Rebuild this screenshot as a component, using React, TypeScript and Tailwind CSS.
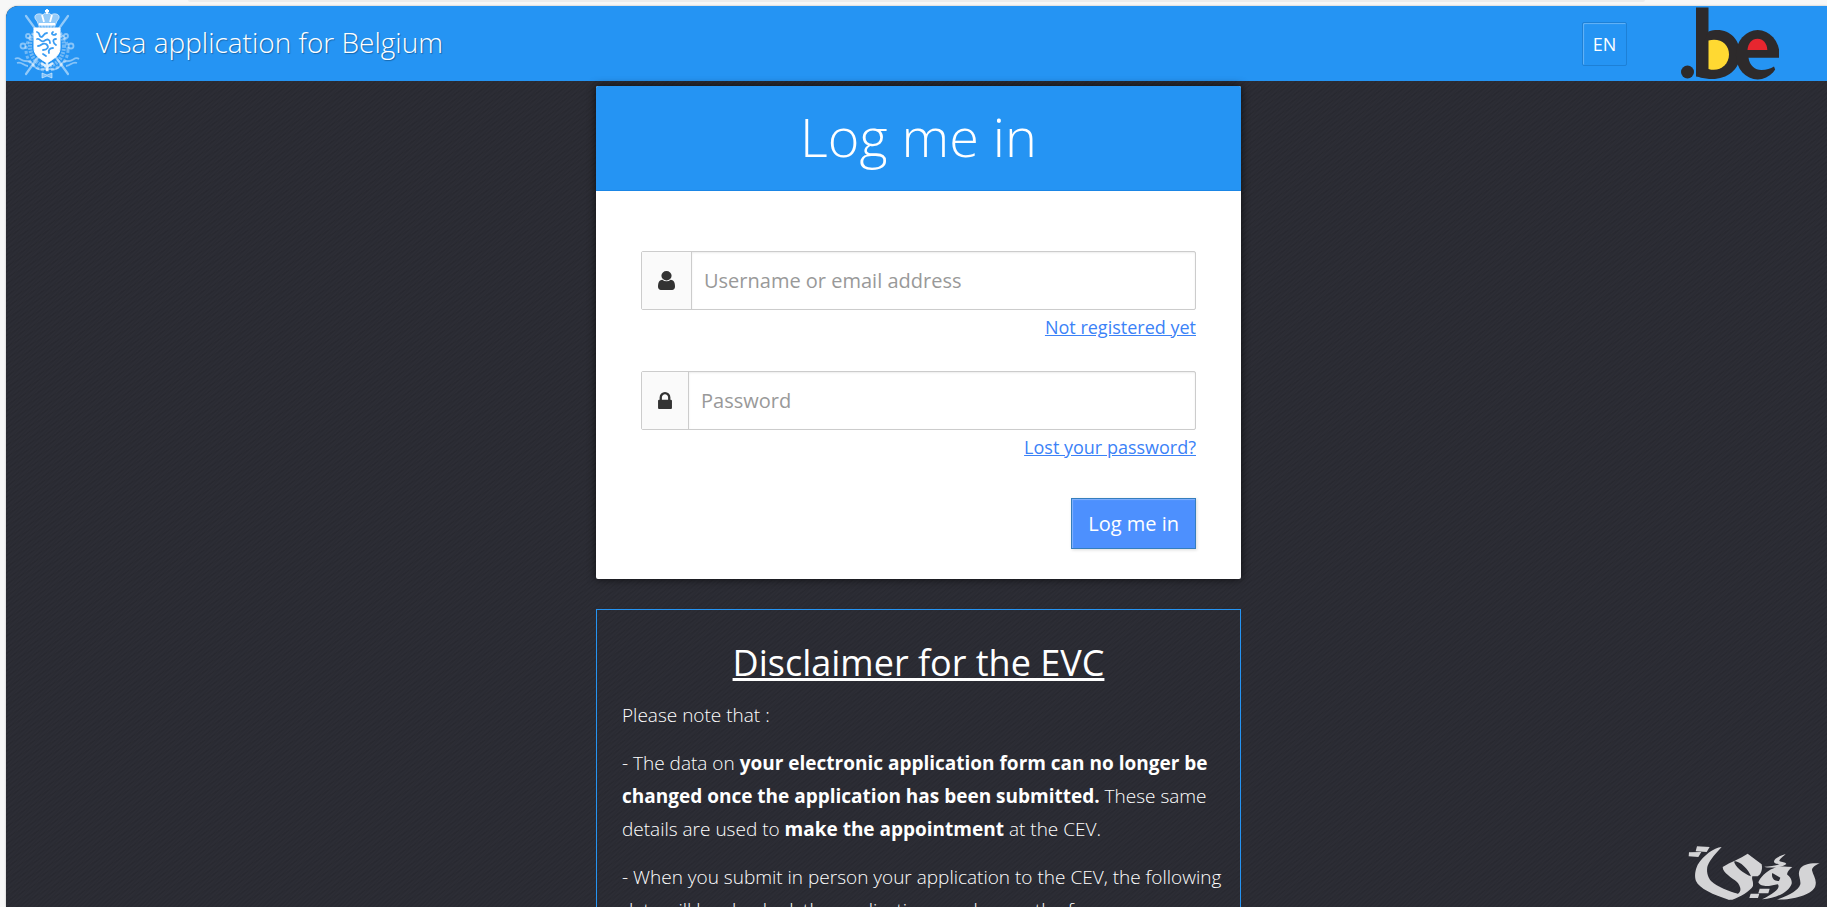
import React, { useState } from "react";

// ==========================================
// LOGOS & ICONS
// ==========================================
const CoatOfArms = () => (
  <svg viewBox="0 0 68 72" className="w-[68px] h-[72px]" fill="none" stroke="white" aria-hidden="true">
    {/* Crossed sceptres */}
    <g opacity="0.5" strokeWidth="2.2" strokeLinecap="round">
      <path d="M12 8L54 66M54 8L12 66" />
    </g>
    {/* Collar */}
    <ellipse cx="33" cy="38" rx="17" ry="20" strokeWidth="4" strokeDasharray="2 1" opacity="0.35" />
    <ellipse cx="33" cy="42" rx="21" ry="20" strokeWidth="3" strokeDasharray="3 2" opacity="0.35" />
    <g opacity="0.45" strokeWidth="1.8">
      <circle cx="9" cy="38" r="2.5" />
      <circle cx="57" cy="38" r="2.5" />
      <circle cx="14" cy="28" r="2" />
      <circle cx="52" cy="28" r="2" />
      <path d="M1 51c4-3 6 2 10 2s6 0 9 5c4 5 8 3 13 3s9 2 13-3c3-5 5-5 9-5s6-5 10-2" />
      <path d="M3 55c5-2 6 3 11 3M63 55c-5-2-6 3-11 3" />
    </g>
    {/* Crown */}
    <path d="M23 13c-6-6 2-9 6-6 1-3 7-3 8 0 4-3 12 0 6 6l-2 5H25z" fill="white" fillOpacity="0.5" strokeOpacity="0.6" />
    <path d="M33 1v5M31 3h4M25 16h16M28 7l2 7M38 7l-2 7" strokeWidth="1.8" />
    {/* Shield */}
    <path d="M20 20h26v20c0 7-5 10-13 15-8-5-13-8-13-15z" fill="white" />
    <g stroke="#3b9df3" strokeWidth="1.8" strokeLinecap="round">
      <path d="M23 24c4 1 1 4 4 5 3 0 2-4 6-4M23 31c4-1 3 4 7 2 4-3 6-1 6 2M24 38c4 0 4-4 8-2 4 3 1 6-3 6M39 24c-3 2 1 4 3 2M42 31c-4 0-3 4 0 6M39 40c-3 0-5 2-4 5M29 46l3 2" />
    </g>
    <path d="M27 55l6 4 6-4M33 55v8" strokeWidth="2.5" opacity="0.8" />
    <path d="M28 65l5 2 5-2v5l-5-2-5 2z" fill="white" fillOpacity="0.4" strokeOpacity="0.5" />
  </svg>
);

const BeLogo = () => (
  <svg viewBox="0 0 98 73" className="w-[98px] h-[73px]" role="img" aria-label=".be">
    <g fill="#2d2a2b">
      <circle cx="6.5" cy="65" r="6.5" />
      <rect x="15" y="0.5" width="12.5" height="69" />
      <path d="M27.5 24.5C45 19 59 30 59 47.5S42 74.5 25 71.5Q20 71 15 69L20 40z" />
      <ellipse cx="76.7" cy="47.7" rx="21.8" ry="24.7" />
    </g>
    <path d="M27.5 33.5C39 30.5 48 37 48 47.5S38 65.5 27.5 62z" fill="#ffd932" />
    <path d="M66.5 43C67 36 71 31.7 76.5 31.7S86 36 86.3 43z" fill="#e7262f" />
    <path d="M67.5 50.7C68.5 58.5 74 63 80.5 63 85.5 63 89.5 61.5 93 59.5L96 67.5 99 73V50.7z" fill="#2594f3" />
  </svg>
);

const UserIcon = () => (
  <svg viewBox="256 128 1280 1536" preserveAspectRatio="none" className="w-[17px] h-[19px]" fill="#333" aria-hidden="true">
    <path d="M1536 1399q0 109-62.5 187t-150.5 78h-854q-88 0-150.5-78t-62.5-187q0-85 8.5-160.5t31.5-152 58.5-131 94-89 134.5-34.5q131 128 313 128t313-128q76 0 134.5 34.5t94 89 58.5 131 31.5 152 8.5 160.5zm-256-887q0 159-112.5 271.5t-271.5 112.5-271.5-112.5-112.5-271.5 112.5-271.5 271.5-112.5 271.5 112.5 112.5 271.5z" />
  </svg>
);

const LockIcon = () => (
  <svg viewBox="320 128 1152 1408" className="w-[14px] h-[17px]" fill="#333" aria-hidden="true">
    <path d="M640 768h512v-192q0-106-75-181t-181-75-181 75-75 181v192zm832 96v576q0 40-28 68t-68 28h-960q-40 0-68-28t-28-68v-576q0-40 28-68t68-28h32v-192q0-184 132-316t316-132 316 132 132 316v192h32q40 0 68 28t28 68z" />
  </svg>
);

const Watermark = () => (
  <svg viewBox="80 74 402 168" className="w-[134px] h-[56px]" fill="#d4d4d6" aria-hidden="true">
    <path d="M110 78l38 2-9 15-33-2zM86 96l37-1-9 15-29-2z" />
    <path d="M184 80C160 82 130 105 112 133 104 150 102 168 107 182 116 204 160 224 205 238L236 222C205 212 172 200 152 182 140 168 138 148 142 136 150 116 168 98 184 80z" />
    <path fillRule="evenodd" d="M187 140C210 125 240 115 262 100L304 132C308 150 300 164 292 168L276 168C273 178 280 182 278 197 270 212 240 230 216 238L205 238 202 214 232 221C244 214 243 200 230 185 215 172 187 158 187 140zM221 122C240 122 265 148 272 168 250 160 222 138 221 122z" />
    <path d="M271 220l26 0-4 13-26 0zM298 205l30 0-4 14-30 0z" />
    <path fillRule="evenodd" d="M396 140C370 137 350 138 340 144 315 154 300 172 294 186 298 196 312 198 326 197L352 192C362 200 345 218 305 237 350 234 386 214 394 190 396 176 386 168 380 162 382 152 388 146 396 140zM336 158L360 172 356 182C340 184 332 170 336 158z" />
    <path d="M376 101C355 108 340 115 341 125 345 132 352 130 358 132 345 137 325 139 312 139 325 144 365 143 378 131 375 124 365 127 357 122 358 115 370 108 376 101z" />
    <path d="M478 129C455 127 425 130 418 148 411 165 422 175 420 192 414 210 390 224 350 238 400 238 450 225 464 200 472 180 458 165 455 150 455 140 468 133 478 129z" />
  </svg>
);

// ==========================================
// FORM FIELD
// ==========================================
const Field = ({
  id,
  type,
  placeholder,
  icon,
  link,
  value,
  onChange,
}: {
  id: string;
  type: string;
  placeholder: string;
  icon: React.ReactNode;
  link: string;
  value: string;
  onChange: (value: string) => void;
}) => (
  <div>
    <div className="flex h-[59px] rounded-xs border border-[#ccc]">
      <label
        htmlFor={id}
        aria-label={placeholder}
        className="flex items-center px-4 bg-[#fafafa] border-r border-[#ccc]"
      >
        {icon}
      </label>
      <input
        id={id}
        type={type}
        placeholder={placeholder}
        value={value}
        onChange={(e) => onChange(e.target.value)}
        className="flex-1 min-w-0 px-3 text-xl text-[#555] placeholder:text-[#999] shadow-[inset_0_1px_2px_rgba(0,0,0,0.08)] outline-none"
      />
    </div>
    <div className="mt-1 h-[26px] text-right text-lg leading-[26px]">
      <a href="#" className="text-[#3b82f7] underline">
        {link}
      </a>
    </div>
  </div>
);

// ==========================================
// PAGE
// ==========================================
const App = () => {
  const [username, setUsername] = useState("");
  const [password, setPassword] = useState("");

  return (
    <div className="flex flex-col h-screen pl-[6px] overflow-hidden bg-[#f7f7f7] font-['Open_Sans',sans-serif]">
      <div className="w-4/5 h-0.5 mx-auto mb-1 shrink-0 rounded-b bg-[#ececec]" />
      <div className="relative flex-1 min-h-0 overflow-hidden rounded-tl-xl bg-[#2a2b33] bg-[repeating-linear-gradient(135deg,rgba(255,255,255,0.012)_0px,rgba(255,255,255,0.012)_1px,transparent_2px,transparent_3px),repeating-linear-gradient(150deg,rgba(0,0,0,0.06)_0px,rgba(0,0,0,0.06)_1px,transparent_2px,transparent_5px)] shadow-[0_0_2px_rgba(0,0,0,0.3)]">
        {/* Top bar */}
        <header className="flex items-center h-[75px] pl-2 pr-12 bg-[#2594f3] text-white">
          <CoatOfArms />
          <h1 className="flex-1 ml-3.5 pb-1 text-[28px] font-light [text-shadow:1px_1px_1px_rgba(0,0,0,0.3)]">
            Visa application for Belgium
          </h1>
          <button className="w-[45px] h-[44px] mr-[54px] rounded-xs border border-[#1d80d6] text-lg shadow-[inset_1px_1px_1px_rgba(255,255,255,0.3)]">
            EN
          </button>
          <BeLogo />
        </header>

        <main className="w-[645px] mx-auto pt-[5px] translate-x-0.5">
          {/* Login card */}
          <section className="rounded-xs bg-white shadow-[0_0_8px_rgba(0,0,0,0.7)]">
            <h2 className="h-[105px] rounded-t-xs border-b border-[#1a86e6] bg-[#2594f3] text-center text-[54px] leading-[100px] font-light text-white">
              Log me in
            </h2>
            <form className="px-[45px] pt-[60px] pb-[30px]" onSubmit={(e) => e.preventDefault()}>
              <div className="space-y-[31px]">
                <Field
                  id="username"
                  type="text"
                  placeholder="Username or email address"
                  icon={<UserIcon />}
                  link="Not registered yet"
                  value={username}
                  onChange={setUsername}
                />
                <Field
                  id="password"
                  type="password"
                  placeholder="Password"
                  icon={<LockIcon />}
                  link="Lost your password?"
                  value={password}
                  onChange={setPassword}
                />
              </div>
              <div className="flex justify-end mt-[38px]">
                <button
                  type="submit"
                  className="h-[51px] px-4 border border-[#357ebd] bg-[#4d90fe] text-xl text-white shadow-[inset_1px_1px_1px_rgba(255,255,255,0.3),1px_1px_3px_rgba(0,0,0,0.15)]"
                >
                  Log me in
                </button>
              </div>
            </form>
          </section>

          {/* Disclaimer */}
          <section className="mt-[30px] pt-[26px] pl-[25px] border border-[#2594f3] text-[19px] leading-[33px] font-light text-white">
            <h2 className="mr-[25px] mb-[9px] text-center text-4xl leading-[54px] font-normal underline">
              Disclaimer for the EVC
            </h2>
            <div className="space-y-[15px]">
              <p>Please note that :</p>
              <p>
                - The data on{" "}
                <strong className="font-bold">
                  your electronic application form can no longer be changed once the application has been submitted.
                </strong>{" "}
                These same details are used to <strong className="font-bold">make the appointment</strong> at the CEV.
              </p>
              <p>
                - When you submit in person your application to the CEV, the following data will be checked: the
                application number on the form
              </p>
            </div>
          </section>
        </main>

        <div className="absolute right-[6px] bottom-[6px]">
          <Watermark />
        </div>
      </div>
    </div>
  );
};

export default App;
